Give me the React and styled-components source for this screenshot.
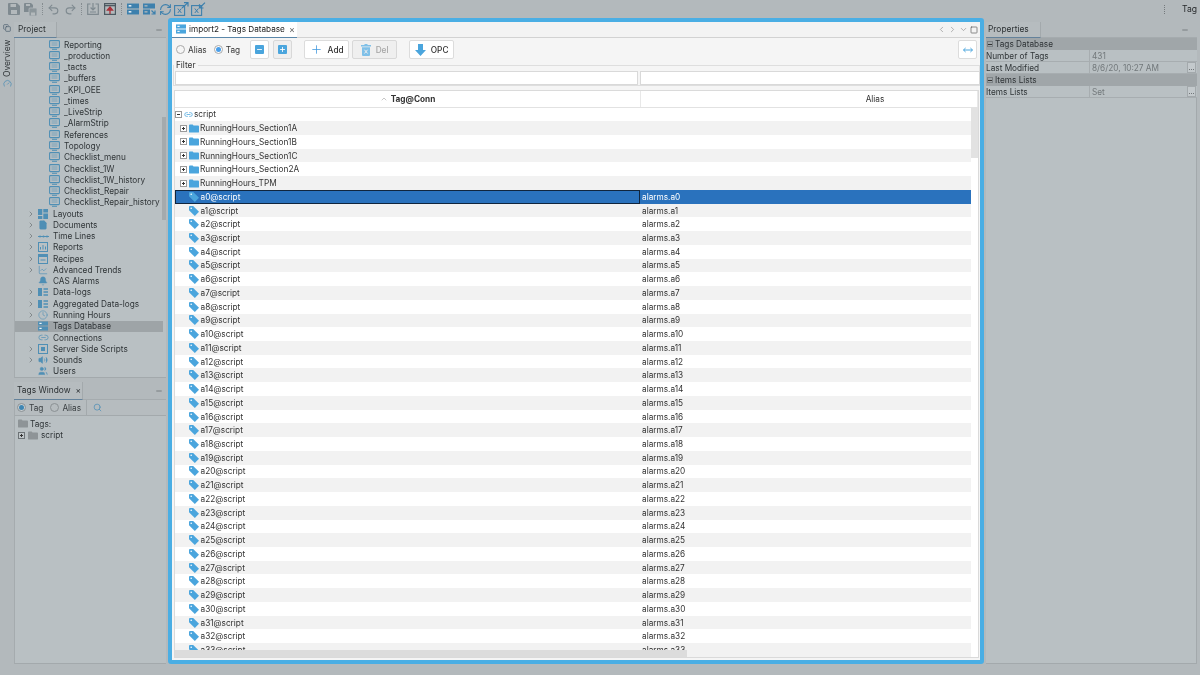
import React from 'react';
import styled, { createGlobalStyle } from 'styled-components';
import { Undo2, Redo2, Plus, ChevronRight, ChevronLeft, ChevronDown, Search, Link2, Gauge, Copy, Bell, Clock, Users, Volume2, FileText, LineChart, Minus, Square, RefreshCw } from 'lucide-react';

const Global = createGlobalStyle`
  html, body { margin: 0; padding: 0; width: 1200px; height: 675px; overflow: hidden; }
  body { background: #b3b9bc; font-family: Inter, "Liberation Sans", sans-serif; }
  * { box-sizing: border-box; }
  svg { flex: none; }
`;

const Page = styled.div`width:1200px;height:675px;display:flex;flex-direction:column;background:#b3b9bc;color:#2f3437;font-size:8.25px;overflow:hidden;filter:blur(0.25px);`;
const TopBar = styled.div`height:18px;display:flex;align-items:center;padding:0 0 0 6px;flex:none;`;
const ToolSlot = styled.span`width:${p=>p.$w||16.3}px;height:18px;display:flex;align-items:center;justify-content:center;color:${p=>p.$c||'#7f8a90'};flex:none;`;
const ToolSep = styled.span`width:1px;height:12px;border-left:1px dotted #858c90;margin:0 3px;flex:none;`;
const TopRight = styled.div`margin-left:auto;display:flex;align-items:center;gap:17px;padding-right:3px;font-size:8.6px;color:#26292b;`;
const Dots = styled.span`width:1px;height:9px;border-left:1px dotted #74797c;`;
const Body = styled.div`flex:1;display:flex;min-height:0;padding-bottom:11px;`;
const Rail = styled.div`width:14px;flex:none;display:flex;flex-direction:column;align-items:center;padding-top:6px;color:#46596a;`;
const RailLabel = styled.div`writing-mode:vertical-rl;transform:rotate(180deg);margin-top:8px;height:37px;font-size:8.4px;color:#2f3437;text-align:center;`;
const RailIcon = styled.div`margin-top:2px;color:#4f8fb5;display:flex;`;
const LeftCol = styled.div`width:152px;flex:none;display:flex;flex-direction:column;padding-top:4px;`;
const Panel = styled.div`display:flex;flex-direction:column;min-height:0;flex:${p=>p.$flex||'1'};`;
const TabStrip = styled.div`height:${p=>p.$h||16}px;margin-top:${p=>p.$mt||0}px;flex:none;display:flex;justify-content:space-between;align-items:center;border-bottom:1px solid #a5abae;padding-right:3px;color:#5c6265;`;
const PanelTab = styled.div`height:${p=>p.$h||16}px;width:${p=>p.$w}px;display:flex;align-items:center;gap:5px;padding-left:${p=>p.$pad||4}px;font-size:8.4px;color:#2b3033;background:#b6bcbf;border-right:1px solid #a3a9ac;border-bottom:1px solid #64829b;white-space:nowrap;`;
const TreePanel = styled.div`position:relative;height:340px;background:#b9c0c3;border-left:1px solid #a5abae;border-bottom:1px solid #a3a9ac;padding-top:1px;overflow:hidden;`;
const TreeRow = styled.div`height:11.27px;display:flex;align-items:center;width:148px;padding-left:${p=>p.$indent}px;background:${p=>p.$sel?'#9ea4a7':'transparent'};white-space:nowrap;`;
const Chevron = styled.span`width:12px;display:flex;justify-content:center;color:#666d70;flex:none;`;
const TreeIcon = styled.span`width:12px;display:flex;justify-content:center;color:#4f8fb5;margin-right:${p=>p.$gap||4}px;flex:none;`;
const ScrollThumb = styled.div`position:absolute;right:0;top:79px;width:4px;height:103px;background:#a4aaad;`;
const TagTools = styled.div`height:16px;display:flex;align-items:center;padding-left:2px;border-left:1px solid #a5abae;border-bottom:1px solid #a3a9ac;background:#b6bcbf;`;
const RadioLabel = styled.label`display:flex;align-items:center;gap:3px;margin-right:${p=>p.$mr||6}px;font-size:8.25px;color:${p=>p.$dim?'#3b4043':'#383838'};`;
const Radio = styled.span`width:9px;height:9px;border-radius:50%;border:1px solid ${p=>p.$dim?'#8b9194':'#a9a9a9'};background:${p=>p.$on?(p.$dim?'#c7cdd0':'#fff'):'transparent'};display:flex;align-items:center;justify-content:center;flex:none;&::after{content:"";display:${p=>p.$on?'block':'none'};width:5px;height:5px;border-radius:50%;background:${p=>p.$dim?'#3f86b3':'#4a9fea'};}`;
const MiniSearch = styled.div`flex:1;height:16px;border-left:1px solid #a3a9ac;display:flex;align-items:center;padding-left:6px;color:#4f8fb5;`;
const TagsTree = styled.div`flex:1;background:#b9c0c3;border-left:1px solid #a5abae;border-bottom:1px solid #a3a9ac;padding:2px 0 0 2px;`;
const TagsRow = styled.div`height:11.5px;display:flex;align-items:center;gap:${p=>p.$gap||2}px;padding-left:1px;`;
const Expander = styled.span`width:7px;height:7px;border:1px solid ${p=>p.$dim?'#6d7376':'#9a9a9a'};background:${p=>p.$dim?'#c0c6c9':'#fff'};position:relative;flex:none;color:#333;display:inline-block;
  &::before{content:"";position:absolute;left:1px;right:1px;top:2px;height:1px;background:#333;}
  &::after{content:"";display:${p=>p.$open?'none':'block'};position:absolute;top:1px;bottom:1px;left:2px;width:1px;background:#333;}`;

const WindowFrame = styled.div`width:816px;height:646px;margin-left:2px;flex:none;border:4px solid #4aaee4;border-radius:3px;background:#f5f5f5;display:flex;flex-direction:column;color:#333;`;
const WinTabs = styled.div`height:16px;flex:none;display:flex;align-items:center;justify-content:space-between;border-bottom:1px solid #d2d2d2;background:#f3f3f3;padding-right:2px;`;
const WinTab = styled.div`width:125px;height:16px;background:#fff;display:flex;align-items:center;padding-left:4px;gap:3px;font-size:8.2px;color:#222;border-bottom:1.5px solid #5a87aa;white-space:nowrap;`;
const CloseMark = styled.span`margin-left:1px;color:#666;display:flex;font-size:9px;`;
const WinNav = styled.div`display:flex;align-items:center;gap:2px;color:#999;`;
const WinBar = styled.div`height:23px;flex:none;display:flex;align-items:center;padding:0 3px 0 4px;`;
const Btn = styled.div`height:19px;width:${p=>p.$w}px;margin-left:${p=>p.$ml||0}px;border:1px solid ${p=>p.$off?'#d8d8d8':'#dcdcdc'};border-radius:2px;background:${p=>p.$off?'#efefef':'#fff'};display:flex;align-items:center;justify-content:center;gap:5px;font-size:8.25px;font-weight:500;color:${p=>p.$off?'#a5a5a5':'#2e2e2e'};flex:none;`;
const SquareIcon = styled.span`width:9px;height:9px;border-radius:1px;background:#4aa5dd;display:flex;align-items:center;justify-content:center;color:#fff;`;
const Spacer = styled.div`flex:1;`;
const FilterBox = styled.fieldset`margin:0 0 4px 1px;padding:2px 0 2px 1px;height:25px;width:807px;border:1px solid #dedede;flex:none;display:flex;gap:2px;min-width:0;`;
const FilterLegend = styled.legend`font-size:8.25px;padding:0 2px;margin-left:-1px;line-height:8px;color:#333;`;
const FilterInput = styled.div`height:14px;width:${p=>p.$w}px;background:#fff;border:1px solid #d9d9d9;flex:none;`;
const TableWrap = styled.div`position:relative;flex:1;margin:0 1px 2px 2px;background:#fff;border:1px solid #dadada;overflow:hidden;min-height:0;`;
const Head = styled.div`height:16.5px;display:grid;grid-template-columns:466px 1fr;border-bottom:1px solid #e2e2e2;background:#fff;`;
const HeadCell = styled.div`display:flex;align-items:center;justify-content:center;gap:3px;font-size:8.25px;font-weight:${p=>p.$b?700:400};color:#333;border-right:1px solid #e8e8e8;padding-left:${p=>p.$b?0:132}px;`;
const Rows = styled.div`width:796px;`;
const Row = styled.div`height:13.74px;display:grid;grid-template-columns:465px 1fr;align-items:center;background:${p=>p.$sel?'#2a72bd':p.$odd?'#f2f2f2':'#fff'};color:${p=>p.$sel?'#fff':'#333'};`;
const Cell = styled.div`height:100%;display:flex;align-items:center;gap:1.5px;padding-left:${p=>p.$indent||0}px;white-space:nowrap;${p=>p.$focus?'outline:1px solid #10253d;outline-offset:-1px;':''}`;
const AliasCell = styled.div`padding-left:2px;white-space:nowrap;`;
const VBar = styled.div`position:absolute;right:0;top:16px;bottom:0;width:7px;background:#fff;`;
const VThumb = styled.div`width:7px;height:51px;background:#e2e2e2;`;
const HThumb = styled.div`position:absolute;left:0;bottom:0;width:512px;height:7px;background:#dcdcdc;`;

const RightCol = styled.div`width:211px;margin-left:2px;flex:none;display:flex;flex-direction:column;padding-top:4px;`;
const PropHeader = styled.div`height:12px;background:#a0a6a9;display:flex;align-items:center;gap:2px;padding-left:1px;font-size:8.25px;`;
const PropRow = styled.div`height:12px;display:grid;grid-template-columns:104px 1fr 10px;align-items:center;background:#b9c0c3;border-bottom:1px solid #a7adb0;`;
const PropName = styled.div`border-right:1px solid #a7adb0;height:100%;display:flex;align-items:center;`;
const PropVal = styled.div`padding-left:2px;color:#72787b;`;
const PropBtn = styled.div`height:11px;width:9px;background:#c3c9cc;border:1px solid #a3a9ac;font-size:7px;text-align:center;line-height:9px;overflow:hidden;`;
const PropFill = styled.div`flex:1;background:#b9c0c3;border-right:1px solid #a3a9ac;border-bottom:1px solid #a3a9ac;`;
const PropMinus = styled.span`width:6px;height:6px;border:1px solid #7b8184;position:relative;flex:none;&::before{content:"";position:absolute;left:0;right:0;top:1.5px;height:1px;background:#333;}`;

const Mon = ({c='#4f8fb5'}) => <svg width="11" height="10" viewBox="0 0 11 10"><rect x=".6" y=".6" width="9.8" height="7" rx=".8" fill="none" stroke={c} strokeWidth="1.1"/><path d="M2.5 3h6M2.5 5h6" stroke={c} strokeWidth=".9" opacity=".7"/><path d="M3 9.3h5" stroke={c} strokeWidth="1"/></svg>;
const DbIcon = ({c='#3d80ad',s=11}) => <svg width={s} height={s} viewBox="0 0 11 11"><rect x="0" y="0.5" width="11" height="4.5" fill={c}/><rect x="0" y="6" width="11" height="4.5" fill={c}/><rect x="1.5" y="2" width="2.5" height="1.2" fill="#fff"/><rect x="1.5" y="7.5" width="2.5" height="1.2" fill="#fff"/></svg>;
const DbArrow = () => <svg width="13" height="12" viewBox="0 0 13 12"><rect x="0" y="0.5" width="12" height="5" fill="#3d80ad"/><rect x="0" y="6.5" width="7" height="5" fill="#3d80ad"/><rect x="1.5" y="2.2" width="3" height="1.3" fill="#b3b9bc"/><rect x="1.5" y="8.2" width="3" height="1.3" fill="#b3b9bc"/><path d="M8.5 7.5l3.5 3.5M12 7.5V11H8.5" fill="none" stroke="#3d80ad" strokeWidth="1.2"/></svg>;
const FolderI = ({c='#4aa5dd'}) => <svg width="10" height="9" viewBox="0 0 11 9"><path d="M0 1a1 1 0 0 1 1-1h3l1 1.3h5a1 1 0 0 1 1 1V8a1 1 0 0 1-1 1H1a1 1 0 0 1-1-1z" fill={c}/></svg>;
const TagI = () => <svg width="10" height="10" viewBox="0 0 10 10"><path d="M0 1a1 1 0 0 1 1-1h3.2L10 5.8 5.8 10 0 4.2z" fill="#4aa5dd"/><circle cx="2.2" cy="2.2" r=".8" fill="#fff"/></svg>;
const SaveI = () => <svg width="12" height="12" viewBox="0 0 12 12"><path d="M0 1a1 1 0 0 1 1-1h8l3 3v8a1 1 0 0 1-1 1H1a1 1 0 0 1-1-1z" fill="#7f8a90"/><rect x="2.5" y="1" width="5.5" height="3" fill="#b3b9bc"/><rect x="3" y="7" width="6" height="4" fill="#b3b9bc"/></svg>;
const SaveAllI = () => <svg width="13" height="13" viewBox="0 0 13 13"><path d="M0 1a1 1 0 0 1 1-1h6l2 2v7H0z" fill="#7f8a90"/><rect x="2" y="1" width="4" height="2" fill="#b3b9bc"/><rect x="5" y="5" width="8" height="8" rx="1" fill="#8c969b" stroke="#b3b9bc" strokeWidth=".8"/><rect x="7" y="9.5" width="4" height="3" fill="#b3b9bc"/></svg>;
const ImportI = () => <svg width="12" height="12" viewBox="0 0 12 12"><path d="M3.5 1H.7v10.3h10.6V1H8.5" fill="none" stroke="#7f8a90" strokeWidth="1.2"/><path d="M6 0v6.5M3.6 4.5 6 7l2.4-2.5M3 9h6" fill="none" stroke="#7f8a90" strokeWidth="1.2"/></svg>;
const ExportI = () => <svg width="12" height="12" viewBox="0 0 12 12"><rect x=".6" y=".6" width="10.8" height="10.8" fill="none" stroke="#4d5a62" strokeWidth="1.2"/><path d="M.6 2.6h10.8" stroke="#4d5a62" strokeWidth="1.4"/><path d="M6 11V6M3.5 7 6 4l2.5 3z" fill="#a8323a" stroke="#a8323a" strokeWidth="1.3"/></svg>;
const XDoc = ({out}) => <svg width="15" height="14" viewBox="0 0 15 14"><rect x=".6" y="3.6" width="10" height="9.8" fill="none" stroke="#3d80ad" strokeWidth="1.1"/><path d="M3.8 6.5l3.6 4.5M7.4 6.5l-3.6 4.5" stroke="#3d80ad" strokeWidth="1"/>{out?<path d="M8 6l6-5.4M10 .6h4v4" fill="none" stroke="#3d80ad" strokeWidth="1.2"/>:<path d="M14 .6 8.5 6M8.5 2.2V6h4" fill="none" stroke="#3d80ad" strokeWidth="1.2"/>}</svg>;
const LayoutI = ({c}) => <svg width="10" height="10" viewBox="0 0 10 10"><rect x="0" y="0" width="4.3" height="6" fill={c}/><rect x="5.3" y="0" width="4.7" height="3.5" fill={c}/><rect x="0" y="7" width="4.3" height="3" fill={c}/><rect x="5.3" y="4.5" width="4.7" height="5.5" fill={c}/></svg>;
const TrashX = () => <svg width="10" height="12" viewBox="0 0 10 12"><path d="M3.5 0h3v1H10v1.4H0V1h3.5z" fill="#7fc0e8"/><path d="M1 3.2h8V11a1 1 0 0 1-1 1H2a1 1 0 0 1-1-1z" fill="#7fc0e8"/><path d="M3.4 5.7l3.2 3.8M6.6 5.7 3.4 9.5" stroke="#efefef" strokeWidth="1"/></svg>;
const BlockDown = () => <svg width="11" height="12" viewBox="0 0 11 12"><path d="M3 0h5v6h3l-5.5 6L0 6h3z" fill="#4aa5dd"/></svg>;
const DoubleArrow = () => <svg width="10" height="6" viewBox="0 0 10 6"><path d="M.5 3h9M2.6 1 .5 3l2.1 2M7.4 1l2.1 2-2.1 2" fill="none" stroke="#4aa5dd" strokeWidth="1"/></svg>;
const Mini = ({c='#4f8fb5',k}) => {
  if (k==='layouts') return <LayoutI c={c}/>;
  if (k==='doc') return <FileText size={10} color={c} fill={c} strokeWidth={1}/>;
  if (k==='time') return <svg width="11" height="5" viewBox="0 0 11 5"><path d="M0 2.5h11" stroke={c}/><circle cx="2" cy="2.5" r="1" fill={c}/><circle cx="5.5" cy="2.5" r="1" fill={c}/><circle cx="9" cy="2.5" r="1" fill={c}/></svg>;
  if (k==='rep') return <svg width="10" height="10" viewBox="0 0 10 10"><rect x=".5" y=".5" width="9" height="9" fill="none" stroke={c}/><path d="M2.5 7.5V5M5 7.5V3M7.5 7.5V4.5" stroke={c}/></svg>;
  if (k==='rec') return <svg width="10" height="10" viewBox="0 0 10 10"><rect x=".5" y=".5" width="9" height="9" fill="none" stroke={c}/><rect x="0" y="0" width="10" height="3" fill={c}/><path d="M2.5 6h5" stroke={c}/></svg>;
  if (k==='trend') return <LineChart size={10} color={c} strokeWidth={1.6}/>;
  if (k==='bell') return <Bell size={10} color={c} fill={c} strokeWidth={1}/>;
  if (k==='log') return <svg width="10" height="10" viewBox="0 0 10 10"><rect x="0" y="1" width="4" height="8" fill={c}/><path d="M5.5 2h4.5M5.5 5h4.5M5.5 8h4.5" stroke={c} strokeWidth="1.4"/></svg>;
  if (k==='clock') return <Clock size={10} color={c} strokeWidth={1.4}/>;
  if (k==='db') return <DbIcon c={c} s={10}/>;
  if (k==='link') return <Link2 size={11} color={c} strokeWidth={1.5}/>;
  if (k==='script') return <svg width="10" height="10" viewBox="0 0 10 10"><rect x=".5" y=".5" width="9" height="9" fill="none" stroke={c}/><rect x="3" y="3" width="4" height="4" fill={c}/></svg>;
  if (k==='sound') return <Volume2 size={10} color={c} fill={c} strokeWidth={1.2}/>;
  if (k==='users') return <Users size={10} color={c} fill={c} strokeWidth={1}/>;
  return null;
};

const screens = ['Reporting','_production','_tacts','_buffers','_KPI_OEE','_times','_LiveStrip','_AlarmStrip','References','Topology','Checklist_menu','Checklist_1W','Checklist_1W_history','Checklist_Repair','Checklist_Repair_history'];
const groups = [['Layouts','layouts',1],['Documents','doc',1],['Time Lines','time',1],['Reports','rep',1],['Recipes','rec',1],['Advanced Trends','trend',1],['CAS Alarms','bell',0],['Data-logs','log',1],['Aggregated Data-logs','log',1],['Running Hours','clock',1],['Tags Database','db',0],['Connections','link',0],['Server Side Scripts','script',1],['Sounds','sound',1],['Users','users',0]];
const folders = ['RunningHours_Section1A','RunningHours_Section1B','RunningHours_Section1C','RunningHours_Section2A','RunningHours_TPM'];
const tags = Array.from({length:34},(_,i)=>i);

export default function App(){
  return <Page><Global/>
    <TopBar>
      <ToolSlot><SaveI/></ToolSlot>
      <ToolSlot><SaveAllI/></ToolSlot>
      <ToolSep/>
      <ToolSlot><Undo2 size={13}/></ToolSlot>
      <ToolSlot><Redo2 size={13}/></ToolSlot>
      <ToolSep/>
      <ToolSlot><ImportI/></ToolSlot>
      <ToolSlot><ExportI/></ToolSlot>
      <ToolSep/>
      <ToolSlot><DbIcon s={12}/></ToolSlot>
      <ToolSlot><DbArrow/></ToolSlot>
      <ToolSlot $c="#3d80ad"><RefreshCw size={13}/></ToolSlot>
      <ToolSlot><XDoc out/></ToolSlot>
      <ToolSlot><XDoc/></ToolSlot>
      <TopRight><Dots/><span>Tag</span></TopRight>
    </TopBar>
    <Body>
      <Rail>
        <Copy size={8}/>
        <RailLabel>Overview</RailLabel>
        <RailIcon><Gauge size={9}/></RailIcon>
      </Rail>
      <LeftCol>
        <TabStrip><PanelTab $w={43} $pad={4}>Project</PanelTab><Minus size={8}/></TabStrip>
        <TreePanel>
          {screens.map(s=><TreeRow key={s} $indent={33}><TreeIcon><Mon/></TreeIcon>{s}</TreeRow>)}
          {groups.map(([n,k,c])=><TreeRow key={n} $indent={10} $sel={n==='Tags Database'}>
            <Chevron>{c?<ChevronRight size={8}/>:null}</Chevron><TreeIcon><Mini k={k}/></TreeIcon>{n}
          </TreeRow>)}
          <ScrollThumb/>
        </TreePanel>
        <Panel $flex="1">
          <TabStrip $mt={4} $h={18}><PanelTab $w={69} $pad={3} $h={18}>Tags Window <span>×</span></PanelTab><Minus size={8}/></TabStrip>
          <TagTools>
            <RadioLabel $dim $mr={7}><Radio $on $dim/>Tag</RadioLabel>
            <RadioLabel $dim $mr={5}><Radio $dim/>Alias</RadioLabel>
            <MiniSearch><Search size={9}/></MiniSearch>
          </TagTools>
          <TagsTree>
            <TagsRow><FolderI c="#8e9497"/>Tags:</TagsRow>
            <TagsRow $gap={3}><Expander $dim/><FolderI c="#8e9497"/>script</TagsRow>
          </TagsTree>
        </Panel>
      </LeftCol>
      <WindowFrame>
        <WinTabs>
          <WinTab><DbIcon c="#4aa5dd" s={10}/>import2 - Tags Database<CloseMark>×</CloseMark></WinTab>
          <WinNav><ChevronLeft size={9}/><ChevronRight size={9}/><ChevronDown size={9}/><Square size={8} color="#555"/></WinNav>
        </WinTabs>
        <WinBar>
          <RadioLabel $mr={7}><Radio/>Alias</RadioLabel>
          <RadioLabel $mr={10}><Radio $on/>Tag</RadioLabel>
          <Btn $w={19}><SquareIcon><Minus size={7} strokeWidth={3}/></SquareIcon></Btn>
          <Btn $w={19} $ml={4} $off><SquareIcon><Plus size={7} strokeWidth={3}/></SquareIcon></Btn>
          <Btn $w={45} $ml={12}><Plus size={13} color="#3b95dc" strokeWidth={1.4}/>Add</Btn>
          <Btn $w={45} $ml={3} $off><TrashX/>Del</Btn>
          <Btn $w={45} $ml={12}><BlockDown/>OPC</Btn>
          <Spacer/>
          <Btn $w={19}><DoubleArrow/></Btn>
        </WinBar>
        <FilterBox>
          <FilterLegend>Filter</FilterLegend>
          <FilterInput $w={463}/><FilterInput $w={340}/>
        </FilterBox>
        <TableWrap>
          <Head><HeadCell $b><ChevronDown size={8} color="#aaa" style={{transform:'rotate(180deg)'}}/>Tag@Conn</HeadCell><HeadCell>Alias</HeadCell></Head>
          <Rows>
            <Row><Cell $indent={0}><Expander $open/><Link2 size={9} color="#4aa5dd"/>script</Cell><AliasCell/></Row>
            {folders.map((f,i)=><Row key={f} $odd={i%2===0}><Cell $indent={5}><Expander/><FolderI/>{f}</Cell><AliasCell/></Row>)}
            {tags.map(i=><Row key={i} $sel={i===0} $odd={i%2===1}><Cell $indent={14} $focus={i===0}><TagI/>{`a${i}@script`}</Cell><AliasCell>{`alarms.a${i}`}</AliasCell></Row>)}
          </Rows>
          <VBar><VThumb/></VBar>
          <HThumb/>
        </TableWrap>
      </WindowFrame>
      <RightCol>
        <TabStrip><PanelTab $w={55} $pad={2}>Properties</PanelTab><Minus size={8} style={{marginRight:5}}/></TabStrip>
        <PropHeader><PropMinus/>Tags Database</PropHeader>
        <PropRow><PropName>Number of Tags</PropName><PropVal>431</PropVal><span/></PropRow>
        <PropRow><PropName>Last Modified</PropName><PropVal>8/6/20, 10:27 AM</PropVal><PropBtn>...</PropBtn></PropRow>
        <PropHeader><PropMinus/>Items Lists</PropHeader>
        <PropRow><PropName>Items Lists</PropName><PropVal>Set</PropVal><PropBtn>...</PropBtn></PropRow>
        <PropFill/>
      </RightCol>
    </Body>
  </Page>;
}
